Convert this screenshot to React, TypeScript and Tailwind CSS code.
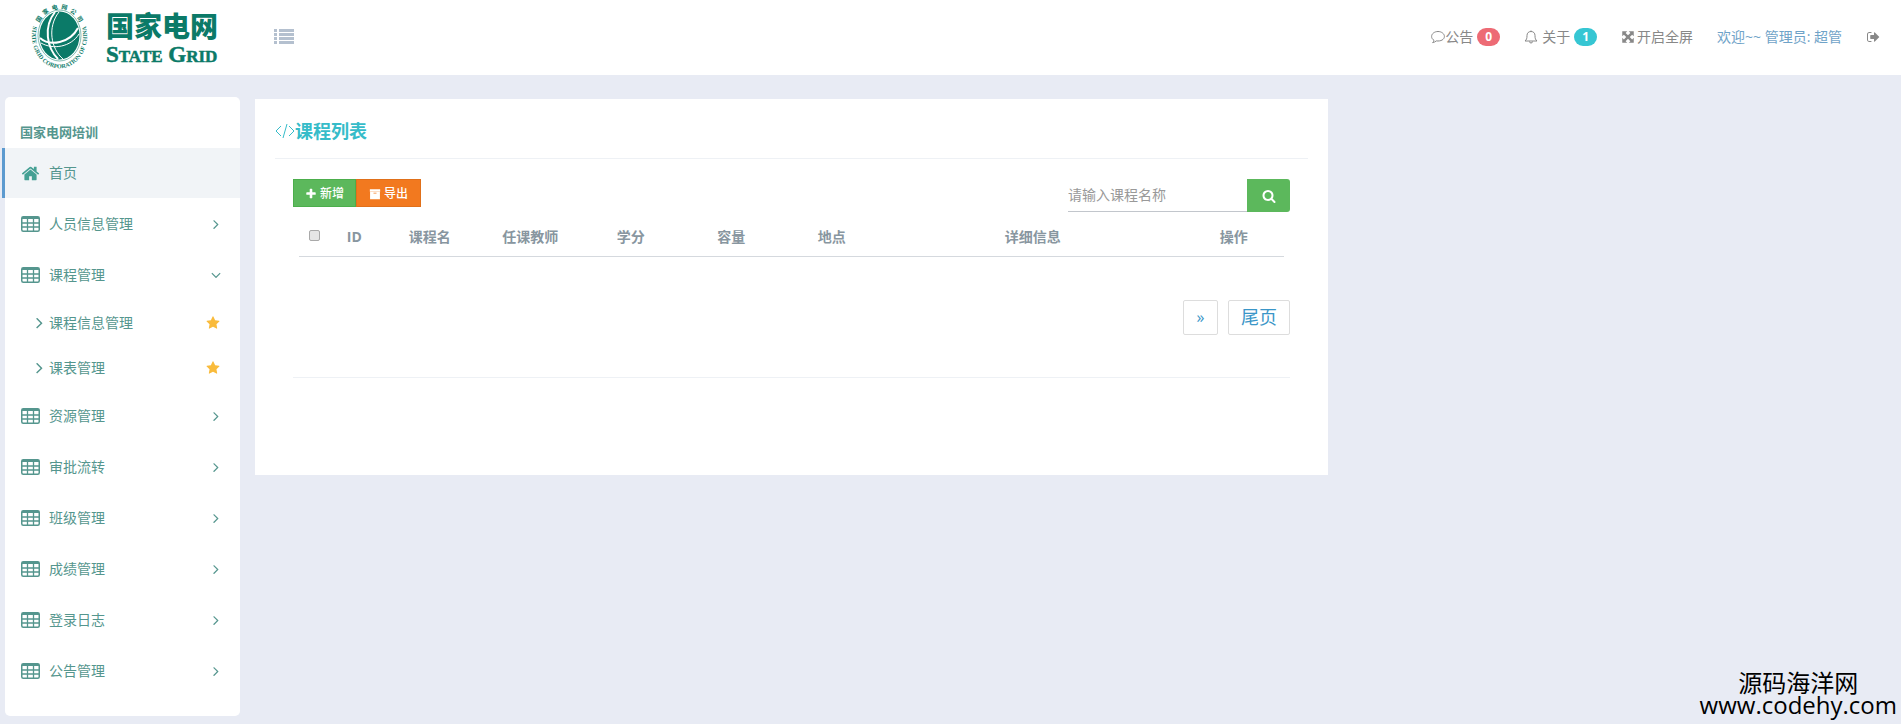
import { useState } from "react";

const icons = {
  home: "M1472 992v480q0 26-19 45t-45 19h-384v-384h-256v384h-384q-26 0-45-19t-19-45v-480q0-1 .5-3t.5-3l575-474 575 474q1 2 1 6zm223-69l-62 74q-8 9-21 11h-3q-13 0-21-7l-692-577-692 577q-12 8-24 7-13-2-21-11l-62-74q-8-10-7-23.5t11-21.5l719-599q32-26 76-26t76 26l244 204v-195q0-14 9-23t23-9h192q14 0 23 9t9 23v408l219 182q10 8 11 21.5t-7 23.5z",
  right:
    "M1171 960q0 13-10 23l-466 466q-10 10-23 10t-23-10l-50-50q-10-10-10-23t10-23l393-393-393-393q-10-10-10-23t10-23l50-50q10-10 23-10t23 10l466 466q10 10 10 23z",
  down: "M1395 736q0 13-10 23l-466 466q-10 10-23 10t-23-10l-466-466q-10-10-10-23t10-23l50-50q10-10 23-10t23 10l393 393 393-393q10-10 23-10t23 10l50 50q10 10 10 23z",
  star: "M1728 647q0 22-26 48l-363 354 86 500q1 7 1 20 0 21-10.5 35.5t-30.5 14.5q-19 0-40-12l-449-236-449 236q-22 12-40 12-21 0-31.5-14.5t-10.5-35.5q0-6 2-20l86-500-364-354q-25-27-25-48 0-37 56-46l502-73 225-455q19-41 49-41t49 41l225 455 502 73q56 9 56 46z",
  search:
    "M1216 832q0-185-131.5-316.5t-316.5-131.5-316.5 131.5-131.5 316.5 131.5 316.5 316.5 131.5 316.5-131.5 131.5-316.5zm512 832q0 52-38 90t-90 38q-54 0-90-38l-343-342q-179 124-399 124-143 0-273.5-55.5t-225-150-150-225-55.5-273.5 55.5-273.5 150-225 225-150 273.5-55.5 273.5 55.5 225 150 150 225 55.5 273.5q0 220-124 399l343 343q37 37 37 90z",
  plus: "M1600 736v192q0 40-28 68t-68 28h-416v416q0 40-28 68t-68 28h-192q-40 0-68-28t-28-68v-416h-416q-40 0-68-28t-28-68v-192q0-40 28-68t68-28h416v-416q0-40 28-68t68-28h192q40 0 68 28t28 68v416h416q40 0 68 28t28 68z",
  archive:
    "M128 192h1536v352H128zM160 592h1472v1072H160zM672 704v112h448v-112z",
  expand:
    "M160 160h640l-208 208 304 304 304-304-208-208h640v640l-208-208-304 304 304 304 208-208v640H992l208-208-304-304-304 304 208 208H160V992l208 208 304-304-304-304-208 208z",
  signOut:
    "M704 1440q0 96-32 96H416q-119 0-203.500-84.500T128 1248V544q0-119 84.500-203.500T416 256h256q32 0 32 96t-32 32H416q-66 0-113 47t-47 113v704q0 66 47 113t113 47h256q32 0 32 32zM1696 896q0 26-19 45l-544 544q-19 19-45 19t-45-19-19-45v-288H608q-26 0-45-19t-19-45V704q0-26 19-45t45-19h416V352q0-26 19-45t45-19 45 19l544 544q19 19 19 45z",
};

interface IconProps {
  name: keyof typeof icons;
  size?: number;
  className?: string;
}

function Icon({ name, size = 14, className }: IconProps) {
  return (
    <svg width={size} height={size} viewBox="0 0 1792 1792" fill="currentColor" fillRule="evenodd" className={className} aria-hidden="true">
      <path d={icons[name]} />
    </svg>
  );
}

function TableIcon() {
  return (
    <svg width="19" height="16" viewBox="0 0 19 16" fill="none" stroke="currentColor" aria-hidden="true">
      <rect x="0.75" y="0.75" width="17.5" height="14.5" rx="1.5" strokeWidth="1.5" />
      <path d="M1 2h17" strokeWidth="2" />
      <path d="M1 7h17M1 11h17M6.500 2v13M12.500 2v13" strokeWidth="1.3" />
    </svg>
  );
}

function Logo() {
  return (
    <svg width="200" height="72" viewBox="0 0 200 72" fill="#0b7a68" role="img" aria-label="国家电网 STATE GRID">
      <defs>
        <path id="ring-top" d="M12.500 35A23 27 0 0 1 58.500 35" />
        <path id="ring-bottom" d="M11 20A27.500 32.500 0 1 0 60 20" />
      </defs>
      <ellipse cx="35.500" cy="34.500" rx="21.500" ry="25.500" fill="none" stroke="#0b7a68" strokeWidth="0.5" />
      <ellipse cx="35.500" cy="34.500" rx="20" ry="24" />
      <g fill="none" stroke="#fff">
        <path d="M31 11C19 26 23 47 34 58" strokeWidth="2" />
        <path d="M35 11C23 26 27 48 39 58" />
        <path d="M16 37C26 46 46 42 54 27" strokeWidth="2" />
        <path d="M17 42C29 49 47 46 55 33" />
      </g>
      <text fontSize="6" fontWeight="700" className="font-['Noto_Sans_CJK_SC',sans-serif]">
        <textPath href="#ring-top" startOffset="50%" textAnchor="middle">
          {"国\u2002家\u2002电\u2002网\u2002公\u2002司"}
        </textPath>
      </text>
      <text fontSize="6" fontWeight="700" className="font-['Liberation_Serif',serif]">
        <textPath href="#ring-bottom" startOffset="50%" textAnchor="middle">STATE GRID CORPORATION OF CHINA</textPath>
      </text>
      <text x="82" y="36" fontSize="28" fontWeight="900" className="font-['Noto_Sans_CJK_SC',sans-serif]">国家电网</text>
      <text x="82" y="61" fontSize="23" fontWeight="700" stroke="#0b7a68" strokeWidth="0.5" className="font-['Liberation_Serif',serif]">
        S<tspan fontSize="17">TATE</tspan> G<tspan fontSize="17">RID</tspan>
      </text>
    </svg>
  );
}

const menus = [
  { label: "人员信息管理" },
  { label: "课程管理", children: ["课程信息管理", "课表管理"] },
  { label: "资源管理" },
  { label: "审批流转" },
  { label: "班级管理" },
  { label: "成绩管理" },
  { label: "登录日志" },
  { label: "公告管理" },
];

const columns = [
  { label: "ID", width: "w-[5%]" },
  { label: "课程名", width: "w-[10%]" },
  { label: "任课教师", width: "w-[10%]" },
  { label: "学分", width: "w-[10%]" },
  { label: "容量", width: "w-[10%]" },
  { label: "地点", width: "w-[10%]" },
  { label: "详细信息", width: "w-[30%]" },
  { label: "操作", width: "w-[10%]" },
];

function Header() {
  return (
    <header className="flex h-[75px] items-center bg-white pr-[21px] pb-[2px] pl-6 text-sm text-[#888]">
      <Logo />
      <button type="button" aria-label="菜单" className="ml-[50px] text-[#b4c0cf]">
        <svg width="20" height="16" viewBox="0 0 20 16" fill="currentColor">
          <path d="M0 0h3v3H0zM0 4h3v3H0zM0 8h3v3H0zM0 12h3v3H0zM5 0h15v3H5zM5 4h15v3H5zM5 8h15v3H5zM5 12h15v3H5z" />
        </svg>
      </button>
      <nav className="ml-auto flex items-center gap-6">
        <a href="#" className="flex items-center">
          <svg width="14" height="14" viewBox="0 0 14 14" fill="none" stroke="currentColor" aria-hidden="true">
            <path d="M7 1.500C3.500 1.500.6 3.700.6 6.500c0 1.600 1 3 2.400 3.800-.2 1-.7 1.700-1.400 2.300 1.500-.2 2.900-.9 3.700-1.700 4.700.6 8.100-1.500 8.100-4.400 0-2.800-2.900-5-6.400-5z" />
          </svg>
          公告
          <span className="ml-1 rounded-full bg-[#ed6b75] px-2 text-xs leading-[18px] font-bold text-white">0</span>
        </a>
        <a href="#" className="flex items-center">
          <svg width="14" height="14" viewBox="0 0 14 14" fill="none" stroke="currentColor" className="mr-1" aria-hidden="true">
            <path d="M7 .5v1M1 11h12c-1.500-1.300-2-2.500-2-5.500 0-2.500-1.600-4-4-4s-4 1.500-4 4c0 3-.5 4.200-2 5.500zM5.500 11.500a1.500 1.500 0 0 0 3 0" />
          </svg>
          关于
          <span className="ml-1 rounded-full bg-[#36c6d3] px-2 text-xs leading-[18px] font-bold text-white">1</span>
        </a>
        <button type="button" className="flex items-center gap-[2px]">
          <Icon name="expand" />
          开启全屏
        </button>
        <a href="#" className="text-[#6fa3c8]">欢迎~~ 管理员: 超管</a>
        <button type="button" aria-label="退出">
          <Icon name="signOut" />
        </button>
      </nav>
    </header>
  );
}

function Sidebar() {
  const [open, setOpen] = useState("课程管理");

  return (
    <aside className="ml-[5px] w-[235px] shrink-0 rounded-[5px] bg-white pt-[22px] pb-5 text-sm text-[#55968e]">
      <h3 className="px-[15px] pt-1 pb-[6px] text-[13px] leading-[19px] font-bold">国家电网培训</h3>
      <a href="#" className="-ml-[3px] flex h-[50px] items-center gap-[9px] border-l-[3px] border-[#5c9acf] bg-[#f1f4f7] pl-4">
        <Icon name="home" size={19} className="text-[#45a094]" />
        首页
      </a>
      <ul>
        {menus.map((item) => (
          <li key={item.label}>
            <button
              type="button"
              className="flex h-[51px] w-full items-center gap-[9px] pr-4 pl-4"
              onClick={() => setOpen(open === item.label ? "" : item.label)}
            >
              <TableIcon />
              {item.label}
              <Icon name={item.children && open === item.label ? "down" : "right"} size={16} className="ml-auto" />
            </button>
            {item.children && open === item.label && (
              <ul>
                {item.children.map((child) => (
                  <li key={child}>
                    <a href="#" className="flex h-[45px] items-center pr-5 pl-[25px]">
                      <Icon name="right" size={19} />
                      {child}
                      <Icon name="star" className="ml-auto text-[#f9bb3c]" />
                    </a>
                  </li>
                ))}
              </ul>
            )}
          </li>
        ))}
      </ul>
    </aside>
  );
}

function CourseList() {
  return (
    <main className="mt-[2px] ml-[15px] h-fit max-w-[1073px] flex-1 bg-white px-5 pt-[18px] pb-[97px]">
      <h1 className="flex items-center border-b border-[#eef1f5] pb-[13px] text-lg leading-[28px] font-bold text-[#36bcc9]">
        <svg width="20" height="14" viewBox="0 0 20 14" fill="none" stroke="currentColor" aria-hidden="true">
          <path d="M6 2L1 7l5 5M14 2l5 5-5 5M12 0L8 14" />
        </svg>
        课程列表
      </h1>
      <div className="px-[18px] pt-5">
        <div className="flex items-start justify-between">
          <div className="flex text-xs text-white">
            <button type="button" className="flex h-7 items-center gap-[3px] border border-[#4cae4c] bg-[#5cb85c] px-[11px] pt-[2px] font-medium">
              <Icon name="plus" size={12} />
              新增
            </button>
            <button type="button" className="flex h-7 items-center gap-[3px] border border-[#e0701a] bg-[#f2791f] px-3 pt-[2px] font-medium">
              <Icon name="archive" size={12} />
              导出
            </button>
          </div>
          <form className="flex h-[33px]" onSubmit={(e) => e.preventDefault()}>
            <input
              type="text"
              aria-label="课程名称"
              placeholder="请输入课程名称"
              className="w-[179px] border-b border-[#c2c6cc] text-sm outline-none placeholder:text-[#999]"
            />
            <button type="submit" aria-label="搜索" className="flex w-[43px] items-center justify-center rounded-r-[3px] bg-[#5cb85c] text-white">
              <Icon name="search" />
            </button>
          </form>
        </div>
        <div className="px-[6px]">
          <table className="w-full table-fixed text-sm text-[#8896a0]">
            <thead>
              <tr className="h-[44px] border-b border-[#d5d9de]">
                <th className="w-[3%] pt-1">
                  <input type="checkbox" aria-label="全选" className="mx-auto block size-[11px] appearance-none rounded-[2px] border border-[#a9a9a9] bg-[#e6e6e6]" />
                </th>
                {columns.map((col) => (
                  <th key={col.label} className={`${col.width} pt-[6px]`}>{col.label}</th>
                ))}
              </tr>
            </thead>
          </table>
        </div>
        <div className="mt-[43px] flex justify-end gap-[10px] text-[#3a96c8]">
          <button type="button" className="h-[35px] w-[35px] rounded-[2px] border border-[#ddd] text-base">»</button>
          <button type="button" className="h-[35px] w-[62px] rounded-[2px] border border-[#ddd] text-lg leading-none">尾页</button>
        </div>
        <hr className="mt-[42px] border-[#eef1f5]" />
      </div>
    </main>
  );
}

export default function App() {
  return (
    <div className="relative min-h-screen bg-[#e8ebf4] font-['Open_Sans','Noto_Sans_CJK_SC',sans-serif]">
      <Header />
      <div className="flex pt-[22px] pb-2">
        <Sidebar />
        <CourseList />
      </div>
      <div className="absolute right-1 bottom-2 text-center text-2xl leading-[22px] text-black">
        <p>源码海洋网</p>
        <p>www.codehy.com</p>
      </div>
    </div>
  );
}
